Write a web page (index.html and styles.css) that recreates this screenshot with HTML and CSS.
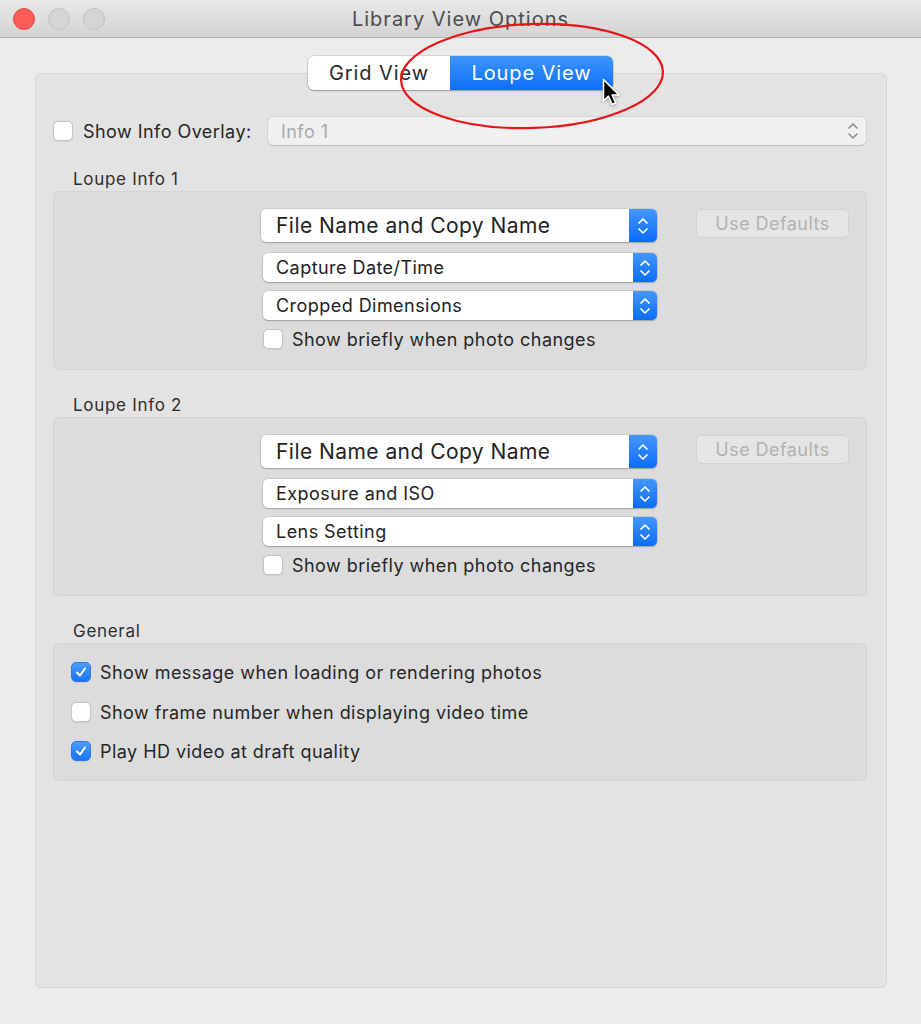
FILE: index.html
```html
<!DOCTYPE html>
<html>
<head>
<meta charset="utf-8">
<link rel="stylesheet" href="styles.css">
</head>
<body>
<div class="window">
  <div class="titlebar">
    <div class="lights">
      <span class="light red"></span>
      <span class="light grey"></span>
      <span class="light grey"></span>
    </div>
    <div class="title">Library View Options</div>
  </div>
  <div class="content">
    <div class="segmented">
      <div class="seg">Grid View</div>
      <div class="seg active">Loupe View</div>
    </div>
    <div class="tabbox">
      <div class="overlay-row">
        <span class="check"></span>
        <span class="overlay-label">Show Info Overlay:</span>
        <div class="select disabled">
          <span class="sel-text">Info 1</span>
          <svg class="grey-step" width="12" height="20" viewBox="0 0 12 20"><path d="M2 7 L6 3 L10 7 M2 13 L6 17 L10 13" fill="none" stroke="#8c8c8c" stroke-width="1.6" stroke-linecap="round" stroke-linejoin="round"/></svg>
        </div>
      </div>

      <div class="section-label first">Loupe Info 1</div>
      <div class="group info">
        <div class="col">
          <div class="select big"><span class="sel-text">File Name and Copy Name</span><span class="step"><svg width="12" height="20" viewBox="0 0 12 20"><path d="M2 7 L6 3 L10 7 M2 13 L6 17 L10 13" fill="none" stroke="#fff" stroke-width="1.7" stroke-linecap="round" stroke-linejoin="round"/></svg></span></div>
          <div class="select small"><span class="sel-text">Capture Date/Time</span><span class="step"><svg width="12" height="20" viewBox="0 0 12 20"><path d="M2 7 L6 3 L10 7 M2 13 L6 17 L10 13" fill="none" stroke="#fff" stroke-width="1.7" stroke-linecap="round" stroke-linejoin="round"/></svg></span></div>
          <div class="select small"><span class="sel-text">Cropped Dimensions</span><span class="step"><svg width="12" height="20" viewBox="0 0 12 20"><path d="M2 7 L6 3 L10 7 M2 13 L6 17 L10 13" fill="none" stroke="#fff" stroke-width="1.7" stroke-linecap="round" stroke-linejoin="round"/></svg></span></div>
          <div class="check-row brief"><span class="check"></span><span>Show briefly when photo changes</span></div>
        </div>
        <div class="btn">Use Defaults</div>
      </div>

      <div class="section-label">Loupe Info 2</div>
      <div class="group info">
        <div class="col">
          <div class="select big"><span class="sel-text">File Name and Copy Name</span><span class="step"><svg width="12" height="20" viewBox="0 0 12 20"><path d="M2 7 L6 3 L10 7 M2 13 L6 17 L10 13" fill="none" stroke="#fff" stroke-width="1.7" stroke-linecap="round" stroke-linejoin="round"/></svg></span></div>
          <div class="select small"><span class="sel-text">Exposure and ISO</span><span class="step"><svg width="12" height="20" viewBox="0 0 12 20"><path d="M2 7 L6 3 L10 7 M2 13 L6 17 L10 13" fill="none" stroke="#fff" stroke-width="1.7" stroke-linecap="round" stroke-linejoin="round"/></svg></span></div>
          <div class="select small"><span class="sel-text">Lens Setting</span><span class="step"><svg width="12" height="20" viewBox="0 0 12 20"><path d="M2 7 L6 3 L10 7 M2 13 L6 17 L10 13" fill="none" stroke="#fff" stroke-width="1.7" stroke-linecap="round" stroke-linejoin="round"/></svg></span></div>
          <div class="check-row brief"><span class="check"></span><span>Show briefly when photo changes</span></div>
        </div>
        <div class="btn">Use Defaults</div>
      </div>

      <div class="section-label">General</div>
      <div class="group general">
        <div class="check-row"><span class="check on"><svg width="14" height="14" viewBox="0 0 14 14"><path d="M3 7.5 L6 10.5 L11 3.5" fill="none" stroke="#fff" stroke-width="2" stroke-linecap="round" stroke-linejoin="round"/></svg></span><span>Show message when loading or rendering photos</span></div>
        <div class="check-row"><span class="check"></span><span>Show frame number when displaying video time</span></div>
        <div class="check-row"><span class="check on"><svg width="14" height="14" viewBox="0 0 14 14"><path d="M3 7.5 L6 10.5 L11 3.5" fill="none" stroke="#fff" stroke-width="2" stroke-linecap="round" stroke-linejoin="round"/></svg></span><span>Play HD video at draft quality</span></div>
      </div>
    </div>
  </div>
</div>
<svg class="annot" width="921" height="1024" viewBox="0 0 921 1024">
  <ellipse cx="532" cy="76" rx="131" ry="52" fill="none" stroke="#e8141a" stroke-width="2.2" transform="rotate(-2 532 76)"/>
</svg>
<svg class="cursor" width="22" height="32" viewBox="0 0 22 32">
  <path d="M1.5 1.5 L1.5 23 L6.5 18.2 L10 26.5 L13.6 25 L10.2 17 L17 17 Z" fill="#000" stroke="#fff" stroke-width="1.6" stroke-linejoin="round"/>
</svg>
</body>
</html>
```

FILE: styles.css
```css
html, body {
  margin: 0;
  padding: 0;
  background: #ececec;
}
body {
  font-family: Inter, "Noto Sans", "DejaVu Sans", sans-serif;
  color: #262626;
  letter-spacing: 0.45px;
  width: 921px;
  height: 1024px;
  overflow: hidden;
  position: relative;
}
.window {
  width: 921px;
  height: 1024px;
  display: flex;
  flex-direction: column;
  background: #ececec;
}
.titlebar {
  height: 37px;
  flex: none;
  background: linear-gradient(#e9e9e9, #d3d3d3);
  border-bottom: 1px solid #b3b3b3;
  display: flex;
  align-items: center;
  position: relative;
}
.lights {
  display: flex;
  gap: 13px;
  padding-left: 13px;
  width: 100px;
  flex: none;
}
.light {
  width: 22px;
  height: 22px;
  border-radius: 50%;
  box-sizing: border-box;
  flex: none;
}
.light.red {
  background: #fd5b55;
  border: 1px solid #e5463f;
}
.light.grey {
  background: #d5d5d5;
  border: 1px solid #c2c2c2;
}
.title {
  flex: 1;
  text-align: center;
  font-size: 20px;
  color: #4d4d4d;
  margin-right: 113px;
  letter-spacing: 1px;
}
.content {
  flex: 1;
  display: flex;
  flex-direction: column;
  padding: 18px 34px 36px 35px;
}
.segmented {
  align-self: center;
  display: flex;
  height: 34px;
  margin-left: -1px;
  margin-bottom: -17px;
  position: relative;
  z-index: 2;
  border-radius: 6px;
  box-shadow: 0 0 0 0.5px rgba(0,0,0,0.18), 0 1px 1.5px rgba(0,0,0,0.25);
  background: #fff;
  font-size: 20px;
  letter-spacing: 0.9px;
}
.seg {
  display: flex;
  align-items: center;
  justify-content: center;
  width: 142px;
  color: #2b2b2b;
}
.seg.active {
  width: 163px;
  background: linear-gradient(#3e95fc, #0f6ffc);
  color: #fff;
  border-radius: 0 6px 6px 0;
}
.tabbox {
  flex: 1;
  background: #e3e3e3;
  border: 1px solid #d6d6d6;
  border-radius: 6px;
  padding: 43px 19px 0 17px;
  display: flex;
  flex-direction: column;
}
.overlay-row {
  display: flex;
  align-items: center;
  height: 28px;
}
.check {
  width: 20px;
  height: 20px;
  box-sizing: border-box;
  flex: none;
  background: #fff;
  border: 1px solid #c4c4c4;
  border-radius: 5px;
  box-shadow: 0 0.5px 1px rgba(0,0,0,0.08);
  display: flex;
  align-items: center;
  justify-content: center;
}
.check.on {
  background: linear-gradient(#4a9cfc, #1a74f6);
  border-color: #2a78e8;
}
.overlay-label {
  font-size: 18px;
  margin-left: 10px;
  width: 185px;
  flex: none;
  white-space: nowrap;
  color: #262626;
}
.select {
  display: flex;
  align-items: center;
  background: #fff;
  border-radius: 5px;
  box-shadow: 0 0 0 0.5px rgba(0,0,0,0.15), 0 1px 1.5px rgba(0,0,0,0.22);
  box-sizing: border-box;
}
.select.disabled {
  flex: 1;
  height: 28px;
  background: #f0f0f0;
  box-shadow: 0 0 0 0.5px rgba(0,0,0,0.1), 0 0.5px 1px rgba(0,0,0,0.12);
  font-size: 18px;
  color: #a9a9a9;
  padding-left: 13px;
  justify-content: space-between;
  padding-right: 7px;
  margin-right: 1px;
}
.sel-text {
  flex: 1;
  white-space: nowrap;
}
.section-label {
  font-size: 17px;
  color: #2e2e2e;
  margin: 24px 0 0 20px;
  height: 23px;
  line-height: 23px;
  letter-spacing: 0.7px;
}
.section-label.first {
  margin-top: 23px;
}
.group {
  background: #dcdcdc;
  border: 1px solid #d4d4d4;
  border-radius: 6px;
  box-sizing: border-box;
}
.group.info {
  height: 179px;
  display: flex;
  align-items: flex-start;
  padding: 17px 0 0 207px;
}
.col {
  width: 396px;
  display: flex;
  flex-direction: column;
}
.select.big {
  height: 33px;
  font-size: 21px;
  padding-left: 15px;
  color: #222;
}
.select.small {
  height: 29px;
  font-size: 18px;
  padding-left: 13px;
  margin-left: 2px;
  color: #222;
}
.select.big + .select.small {
  margin-top: 11px;
}
.select.small + .select.small {
  margin-top: 9px;
}
.step {
  align-self: stretch;
  width: 28px;
  background: linear-gradient(#4398fd, #0b6cfb);
  border-radius: 0 5px 5px 0;
  display: flex;
  align-items: center;
  justify-content: center;
}
.select.small .step {
  width: 24px;
}
.check-row {
  display: flex;
  align-items: center;
  height: 20px;
  font-size: 18px;
  color: #262626;
  white-space: nowrap;
}
.check-row .check {
  margin-right: 9px;
}
.check-row.brief {
  margin-top: 9px;
  margin-left: 2px;
}
.btn {
  margin-left: 39px;
  width: 153px;
  height: 29px;
  box-sizing: border-box;
  background: #e5e5e5;
  border: 1px solid #d2d2d2;
  border-radius: 5px;
  color: #b2b2b2;
  font-size: 18px;
  display: flex;
  align-items: center;
  justify-content: center;
}
.group.general {
  height: 138px;
  padding: 18px 0 0 17px;
  display: flex;
  flex-direction: column;
  gap: 20px;
}
.group.general .check-row:last-child {
  margin-top: -1px;
}
.annot {
  position: absolute;
  left: 0;
  top: 0;
  pointer-events: none;
  z-index: 5;
}
.cursor {
  position: absolute;
  left: 602px;
  top: 78px;
  z-index: 6;
  filter: drop-shadow(0 1px 1.5px rgba(0,0,0,0.35));
}
```
